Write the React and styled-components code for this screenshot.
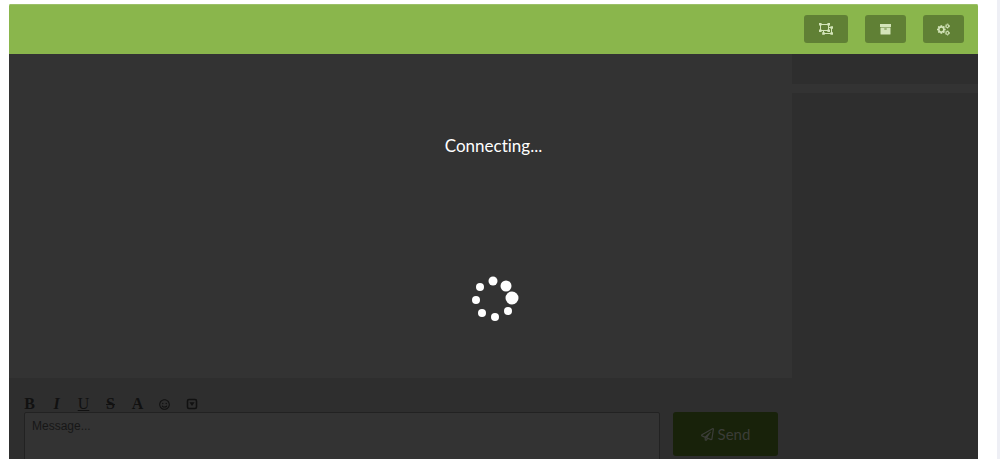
import React from 'react';
import styled, { createGlobalStyle } from 'styled-components';
import { FaRegSmile, FaRegPaperPlane } from 'react-icons/fa';

const GlobalStyle = createGlobalStyle`
  * {
    box-sizing: border-box;
  }

  body {
    margin: 0;
    background: #fff;
    font-family: Lato, "Liberation Sans", sans-serif;
    font-variant-ligatures: none;
    overflow: hidden;
  }
`;

const UngroupIcon = () => (
  <svg width="16" height="14" viewBox="0 0 16 14" fill="none" stroke="currentColor" aria-hidden="true">
    <path d="M2.5 2.5h8v6h-8zM10.5 5.5h3v6h-8v-3" />
    <g fill="currentColor" stroke="none">
      <path d="M1 1h2.6v2.6H1zM9.4 1H12v2.6H9.4zM1 7.4h2.6V10H1zM9.4 7.4H12V10H9.4z" />
      <path d="M12.4 4.2H15v2.6h-2.6zM12.4 10.2H15v2.6h-2.6zM4.2 10.2h2.6v2.6H4.2z" />
    </g>
  </svg>
);

const ArchiveIcon = () => (
  <svg width="11" height="11" viewBox="0 0 11 11" fill="currentColor" aria-hidden="true">
    <path d="M0 0h11v3H0z" />
    <path fillRule="evenodd" d="M.5 3.6h10V10q0 .6-.6.6H1.100q-.6 0-.6-.6zM4.300 4.600v.9h2.400v-.9z" />
  </svg>
);

const CogsIcon = () => (
  <svg width="13" height="13" viewBox="0 0 1920 1792" fill="currentColor" aria-hidden="true">
    <path d="M896 896q0-106-75-181t-181-75-181 75-75 181 75 181 181 75 181-75 75-181zM1280 805v185q0 10-7 19.500t-16 10.500l-155 24q-11 35-32 76 34 48 90 115 7 11 7 20 0 12-7 19-23 30-82.500 89.500t-78.500 59.500q-11 0-21-7l-115-90q-37 19-77 31-11 108-23 155-7 24-30 24h-186q-11 0-20-7.500t-10-17.500l-23-153q-34-10-75-31l-118 89q-7 7-20 7-11 0-21-8-144-133-144-160 0-9 7-19 10-14 41-53t47-61q-23-44-35-82l-152-24q-10-1-17-9.500t-7-19.500v-185q0-10 7-19.500t16-10.500l155-24q11-35 32-76-34-48-90-115-7-11-7-20 0-12 7-20 22-30 82-89t79-59q11 0 21 7l115 90q34-18 77-32 11-108 23-154 7-24 30-24h186q11 0 20 7.500t10 17.500l23 153q34 10 75 31l118-89q8-7 20-7 11 0 21 8 144 133 144 160 0 9-7 19-12 16-42 54t-45 60q23 48 34 82l152 23q10 2 17 10.500t7 19.500z" fillRule="evenodd" />
    {[384, 1408].map((cy) => (
      <g key={cy} fill="none" stroke="currentColor">
        <circle cx="1536" cy={cy} r="205" strokeWidth="150" />
        <circle cx="1536" cy={cy} r="310" strokeWidth="130" strokeDasharray="170 155" />
      </g>
    ))}
  </svg>
);

const CaretSquareIcon = () => (
  <svg width="12" height="12" viewBox="0 0 12 12" aria-hidden="true">
    <rect x="1.500" y="1.500" width="9" height="9" rx="1.500" fill="none" stroke="currentColor" strokeWidth="1.600" />
    <path d="M3.400 4.200h5.200L6 8z" fill="currentColor" />
  </svg>
);

const headerActions = [
  { label: 'Ungroup', icon: <UngroupIcon />, wide: true },
  { label: 'Archive', icon: <ArchiveIcon /> },
  { label: 'Settings', icon: <CogsIcon /> },
];

const dots = [
  { cx: 31, cy: 15, r: 4.5 },
  { cx: 44, cy: 20, r: 5.5 },
  { cx: 50, cy: 32, r: 6.5 },
  { cx: 46, cy: 45, r: 4 },
  { cx: 33, cy: 51, r: 4 },
  { cx: 20, cy: 47, r: 4 },
  { cx: 14, cy: 34, r: 4 },
  { cx: 18, cy: 21, r: 4 },
];

const App = () => {
  return (
    <Page>
      <GlobalStyle />
      <Chat>
        <Header>
          {headerActions.map(({ label, icon, wide }) => (
            <HeaderButton key={label} type="button" aria-label={label} $wide={wide}>
              {icon}
            </HeaderButton>
          ))}
        </Header>
        <Body>
          <Main>
            <Messages />
            <Composer>
              <Toolbar>
                <Tool type="button">B</Tool>
                <Tool type="button" $italic>I</Tool>
                <Tool type="button" $weight="normal" $decoration="underline">U</Tool>
                <Tool type="button" $decoration="line-through">S</Tool>
                <Tool type="button">A</Tool>
                <Tool type="button" aria-label="Emoticons"><FaRegSmile size={11} /></Tool>
                <Tool type="button" aria-label="More"><CaretSquareIcon /></Tool>
              </Toolbar>
              <InputRow>
                <MessageBox aria-label="Message" placeholder="Message..." />
                <SendButton type="button">
                  <FaRegPaperPlane size={13} />
                  Send
                </SendButton>
              </InputRow>
            </Composer>
          </Main>
          <Sidebar>
            <Divider />
          </Sidebar>
          <Overlay role="status">
            <Status>Connecting...</Status>
            <Spinner viewBox="0 0 64 64" aria-hidden="true">
              {dots.map((dot) => (
                <circle key={`${dot.cx}-${dot.cy}`} {...dot} />
              ))}
            </Spinner>
          </Overlay>
        </Body>
      </Chat>
    </Page>
  );
};

const Page = styled.div`
  min-height: 100vh;
  padding: 4px 19px 0 9px;
  border-right: 3px solid #eeeff5;
`;

const Chat = styled.div`
  border-radius: 2px 2px 0 0;
  overflow: hidden;
`;

const Header = styled.header`
  display: flex;
  align-items: flex-start;
  justify-content: flex-end;
  gap: 17px;
  height: 50px;
  padding: 10px 14px 0;
  background: #8ab64c;
  border-top: 1px solid #9cc069;
`;

const HeaderButton = styled.button`
  display: flex;
  align-items: center;
  justify-content: center;
  width: ${(props) => (props.$wide ? '44px' : '41px')};
  height: 28px;
  padding: 0;
  border: 0;
  border-radius: 3px;
  background: #608035;
  color: #d3e4b9;
`;

const Body = styled.div`
  position: relative;
  display: flex;
  background: #2e2e2e;
`;

const Main = styled.main`
  flex: 1;
  min-width: 0;
`;

const Messages = styled.section`
  height: 324px;
  background: #333;
`;

const Composer = styled.form`
  padding: 18px 14px 14px 15px;
`;

const Toolbar = styled.div`
  display: flex;
  gap: 8px;
  height: 16px;
  margin-left: -4px;
`;

const Tool = styled.button`
  display: flex;
  align-items: center;
  justify-content: center;
  width: 19px;
  padding: 0;
  border: 0;
  background: none;
  color: #111;
  font-family: "Liberation Serif", serif;
  font-size: 16px;
  line-height: 16px;
  font-weight: ${(props) => props.$weight || 'bold'};
  font-style: ${(props) => (props.$italic ? 'italic' : 'normal')};
  text-decoration: ${(props) => props.$decoration || 'none'};
`;

const InputRow = styled.div`
  display: flex;
  align-items: flex-start;
  gap: 13px;
`;

const MessageBox = styled.textarea`
  flex: 1;
  min-width: 0;
  height: 60px;
  padding: 5px 7px;
  border: 1px solid #222;
  border-radius: 2px;
  background: #333;
  color: #111;
  font-family: "Liberation Sans", sans-serif;
  font-size: 12px;
  line-height: 16px;
  resize: none;

  &::placeholder {
    color: #171717;
  }
`;

const SendButton = styled.button`
  display: flex;
  align-items: center;
  justify-content: center;
  gap: 4px;
  width: 105px;
  height: 44px;
  border: 0;
  border-radius: 3px;
  background: #18220a;
  color: #3b3d38;
  font-family: inherit;
  font-size: 15px;
`;

const Sidebar = styled.aside`
  flex: 0 0 186px;
  padding-top: 30px;
`;

const Divider = styled.div`
  height: 9px;
  background: #333;
`;

const Overlay = styled.div`
  position: absolute;
  inset: 0;
  display: flex;
  flex-direction: column;
  align-items: center;
  padding-top: 80px;
  color: #fff;
`;

const Status = styled.div`
  font-size: 17px;
  line-height: 24px;
`;

const Spinner = styled.svg`
  width: 64px;
  height: 64px;
  margin-top: 108px;
  fill: currentColor;
`;

export default App;
